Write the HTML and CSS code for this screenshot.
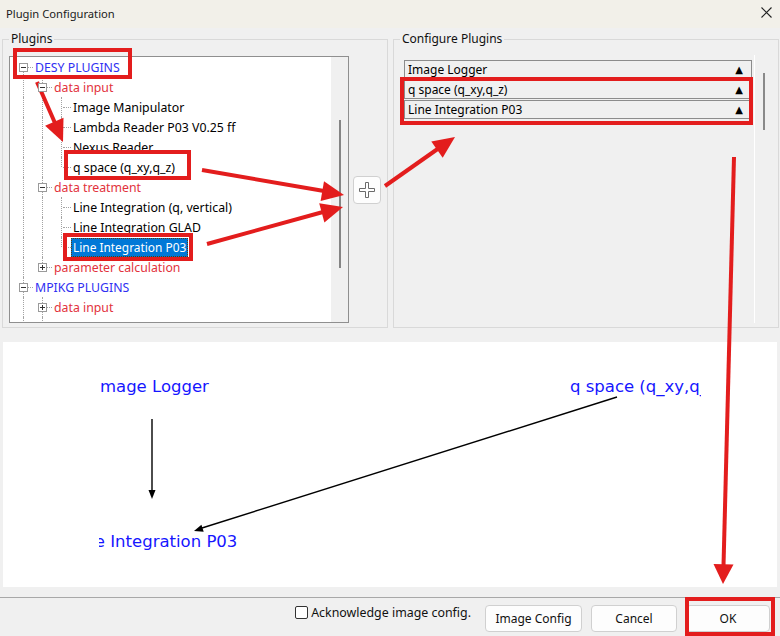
FILE: index.html
```html
<!DOCTYPE html>
<html>
<head>
<meta charset="utf-8">
<link rel="stylesheet" href="styles.css">
</head>
<body>
<div class="titlebar">
  <span class="title">Plugin Configuration</span>
  <svg class="close" width="11" height="11" viewBox="0 0 11 11"><path d="M0.5 0.5L10.5 10.5M10.5 0.5L0.5 10.5" stroke="#222" stroke-width="1.1" fill="none"/></svg>
</div>

<div class="top">
  <div class="group plugins">
    <span class="legend">Plugins</span>
    <div class="tree">
      <div class="tree-items">
        <div class="row"><span class="c exp down"><i class="box"></i></span><span class="lbl root">DESY PLUGINS</span></div>
        <div class="row"><span class="c ln"></span><span class="c exp up down"><i class="box"></i></span><span class="lbl cat">data input</span></div>
        <div class="row"><span class="c ln"></span><span class="c ln"></span><span class="c tee"></span><span class="lbl">Image Manipulator</span></div>
        <div class="row"><span class="c ln"></span><span class="c ln"></span><span class="c tee"></span><span class="lbl">Lambda Reader P03 V0.25 ff</span></div>
        <div class="row"><span class="c ln"></span><span class="c ln"></span><span class="c tee"></span><span class="lbl">Nexus Reader</span></div>
        <div class="row"><span class="c ln"></span><span class="c ln"></span><span class="c end"></span><span class="lbl">q space (q_xy,q_z)</span></div>
        <div class="row"><span class="c ln"></span><span class="c exp up down"><i class="box"></i></span><span class="lbl cat">data treatment</span></div>
        <div class="row"><span class="c ln"></span><span class="c ln"></span><span class="c tee"></span><span class="lbl">Line Integration (q, vertical)</span></div>
        <div class="row"><span class="c ln"></span><span class="c ln"></span><span class="c tee"></span><span class="lbl">Line Integration GLAD</span></div>
        <div class="row"><span class="c ln"></span><span class="c ln"></span><span class="c end"></span><span class="lbl sel">Line Integration P03</span></div>
        <div class="row"><span class="c ln"></span><span class="c exp up"><i class="box plus"></i></span><span class="lbl cat">parameter calculation</span></div>
        <div class="row"><span class="c exp up down"><i class="box"></i></span><span class="lbl root">MPIKG PLUGINS</span></div>
        <div class="row"><span class="c ln"></span><span class="c exp up down"><i class="box plus"></i></span><span class="lbl cat">data input</span></div>
        <div class="row"><span class="c ln"></span><span class="c ln"></span></div>
      </div>
      <div class="vscroll"><div class="thumb tree-thumb"></div></div>
    </div>
    <button class="addbtn" type="button">
      <svg width="18" height="18" viewBox="0 0 18 18"><path d="M7.5 1.5h3v6h6v3h-6v6h-3v-6h-6v-3h6z" fill="#fff" stroke="#6b6b6b" stroke-width="1"/></svg>
    </button>
  </div>

  <div class="group configure">
    <span class="legend">Configure Plugins</span>
    <div class="cfg-scroll">
      <div class="cfg-view">
        <div class="cfg-row"><span>Image Logger</span><span class="up">▲</span></div>
        <div class="cfg-row"><span>q space (q_xy,q_z)</span><span class="up">▲</span></div>
        <div class="cfg-row"><span>Line Integration P03</span><span class="up">▲</span></div>
      </div>
      <div class="vscroll cfg-bar"><div class="thumb cfg-thumb"></div></div>
    </div>
  </div>
</div>

<div class="diagram">
  <svg width="774" height="245" viewBox="3 342 774 245">
    <defs>
      <clipPath id="clipL"><rect x="99" y="342" width="400" height="245"/></clipPath>
      <clipPath id="clipR"><rect x="400" y="342" width="301" height="245"/></clipPath>
    </defs>
    <g class="node-text">
      <text x="152" y="392" text-anchor="middle" clip-path="url(#clipL)">Image Logger</text>
      <text x="570" y="392" clip-path="url(#clipR)">q space (q_xy,q_z)</text>
      <text x="154" y="547" text-anchor="middle" clip-path="url(#clipL)">Line Integration P03</text>
    </g>
    <line x1="152" y1="419" x2="152" y2="492" stroke="#000" stroke-width="1.4"/>
    <polygon points="152,499 148.5,490 155.5,490" fill="#000"/>
    <line x1="617" y1="397" x2="202" y2="528" stroke="#000" stroke-width="1.4"/>
    <polygon points="194,531 203.7,531.8 201.4,524.7" fill="#000"/>
  </svg>
</div>

<div class="footer">
  <label class="ack"><span class="chk"></span>Acknowledge image config.</label>
  <button class="btn b-img" type="button">Image Config</button>
  <button class="btn b-cancel" type="button">Cancel</button>
  <button class="btn b-ok" type="button">OK</button>
</div>

<svg class="annot" width="780" height="636" viewBox="0 0 780 636">
  <g fill="none" stroke="#e31d1d" stroke-width="4">
    <rect x="15" y="50" width="115" height="27"/>
    <rect x="66" y="152" width="123" height="26"/>
    <rect x="65" y="235" width="126" height="24"/>
    <rect x="402" y="79" width="349" height="44"/>
    <rect x="687" y="599" width="86" height="35"/>
    <line x1="37" y1="82" x2="55" y2="123"/>
    <line x1="202" y1="170" x2="324" y2="191"/>
    <line x1="207" y1="244" x2="323" y2="212"/>
    <line x1="385" y1="186" x2="439" y2="148"/>
    <line x1="734" y1="157" x2="723.5" y2="566"/>
  </g>
  <g fill="#e31d1d">
    <polygon points="63,142 45.1,125.8 63.5,117.8"/>
    <polygon points="344,195 320.6,201 324,181.3"/>
    <polygon points="343,207 324.4,222.5 319.2,203.2"/>
    <polygon points="455,137 442.7,157.8 431.3,141.4"/>
    <polygon points="723,584 713.5,564 733.5,564.5"/>
  </g>
</svg>
</body>
</html>
```

FILE: styles.css
```css
html, body {
  margin: 0;
  padding: 0;
}
body {
  width: 780px;
  height: 636px;
  overflow: hidden;
  position: relative;
  background: #f0f0f0;
  font-family: "Noto Sans", "Liberation Sans", sans-serif;
  font-size: 12px;
  color: #000;
}

/* title bar */
.titlebar {
  height: 28px;
  background: #f2f0e9;
  display: flex;
  align-items: center;
  justify-content: space-between;
  padding: 0 8px 0 6px;
  box-sizing: border-box;
}
.title {
  color: #1a1a1a;
  font-size: 11.2px;
  margin-top: -2px;
}
.close {
  margin-top: -4px;
}

/* groups */
.top {
  display: flex;
  gap: 5px;
  padding: 11px 0 0 2px;
}
.group {
  position: relative;
  box-sizing: border-box;
  width: 386px;
  height: 289px;
  border: 1px solid #d9d9d9;
}
.legend {
  position: absolute;
  top: -10px;
  left: 6px;
  padding: 0 2px;
  background: #f0f0f0;
  line-height: 18px;
  font-size: 12px;
  color: #111;
}
.plugins {
  display: flex;
  align-items: center;
  gap: 4px;
  padding: 16px 0 4px 6px;
}

/* tree */
.tree {
  width: 340px;
  height: 267px;
  box-sizing: border-box;
  border: 1px solid #8f8f8f;
  background: #fff;
  display: flex;
  align-self: flex-start;
}
.tree-items {
  flex: 1;
  overflow: hidden;
  padding-left: 4px;
}
.row {
  display: flex;
  align-items: center;
  height: 20px;
  white-space: nowrap;
}
.c {
  position: relative;
  flex: none;
  width: 19px;
  height: 20px;
}
.c.ln::before,
.c.tee::before,
.c.end::before,
.c.exp.up::before,
.c.exp.down::before {
  content: "";
  position: absolute;
  left: 9px;
  top: 0;
  bottom: 0;
  border-left: 1px dotted #a3a3a3;
}
.c.end::before,
.c.exp.up::before {
  bottom: 10px;
}
.c.exp.down::before {
  top: 10px;
}
.c.exp.up.down::before {
  top: 0;
  bottom: 0;
}
.c.tee::after,
.c.end::after,
.c.exp::after {
  content: "";
  position: absolute;
  left: 11px;
  right: 0;
  top: 10px;
  border-top: 1px dotted #a3a3a3;
}
.box {
  position: absolute;
  left: 5px;
  top: 6px;
  width: 9px;
  height: 9px;
  box-sizing: border-box;
  border: 1px solid #9a9a9a;
  background: #fff;
  z-index: 1;
}
.box::before {
  content: "";
  position: absolute;
  left: 1px;
  top: 3px;
  width: 5px;
  height: 1px;
  background: #333;
}
.box.plus::after {
  content: "";
  position: absolute;
  left: 3px;
  top: 1px;
  width: 1px;
  height: 5px;
  background: #333;
}
.lbl {
  padding: 0 2px;
  line-height: 19px;
  height: 19px;
  font-size: 12.3px;
}
.root {
  color: #2f2ff2;
}
.cat {
  color: #e2323c;
}
.sel {
  background: #0078d7;
  color: #fff;
  font-size: 11.9px;
  outline: 1px dotted #5a3a10;
  outline-offset: -1px;
}

/* scrollbars */
.vscroll {
  flex: none;
  width: 17px;
  background: #f0f0f0;
}
.thumb {
  width: 2px;
  background: #858585;
  margin-left: 8px;
}
.tree-thumb {
  margin-top: 63px;
  height: 148px;
}

/* add button */
.addbtn {
  width: 28px;
  height: 28px;
  padding: 0;
  box-sizing: border-box;
  border: 1px solid #d0d0d0;
  border-radius: 4px;
  background: #fdfdfd;
  display: flex;
  align-items: center;
  justify-content: center;
  margin-top: 1px;
}

/* configure */
.configure {
  padding: 15px 0 4px 5px;
}
.cfg-scroll {
  display: flex;
  width: 373px;
  height: 268px;
}
.cfg-view {
  width: 356px;
  box-sizing: border-box;
  padding: 5px 2px 0 5px;
  border-right: 1px solid #ffffff;
}
.cfg-row {
  height: 19px;
  box-sizing: border-box;
  border: 1px solid #8c8c8c;
  margin-bottom: 1px;
  display: flex;
  align-items: center;
  justify-content: space-between;
  padding: 0 8px 0 3px;
  font-size: 12px;
  line-height: 17px;
}
.cfg-row .up {
  font-size: 10px;
  font-family: "DejaVu Sans", sans-serif;
}
.cfg-bar {
  background: transparent;
}
.cfg-thumb {
  margin-top: 18px;
  height: 57px;
  background: #8a8a8a;
}

/* diagram */
.diagram {
  margin: 14px 3px 0 3px;
  height: 245px;
  background: #fff;
}
.diagram svg {
  display: block;
}
.node-text {
  font-family: "DejaVu Sans", sans-serif;
  font-size: 16.5px;
  fill: #1616ff;
}

/* footer */
.footer {
  margin-top: 10px;
  height: 39px;
  box-sizing: border-box;
  border-top: 1px solid #a8a8a8;
  display: flex;
  align-items: center;
  justify-content: flex-end;
  padding: 0 10px 0 0;
  gap: 9px;
}
.ack {
  display: flex;
  align-items: center;
  gap: 3px;
  margin-right: 5px;
  margin-top: -9px;
  font-size: 12.4px;
  color: #111;
}
.chk {
  width: 13px;
  height: 13px;
  box-sizing: border-box;
  border: 1px solid #333;
  border-radius: 2px;
  background: #fff;
}
.btn {
  height: 27px;
  box-sizing: border-box;
  border: 1px solid #d0d0d0;
  border-radius: 4px;
  background: #fdfdfd;
  font-family: "Noto Sans", "Liberation Sans", sans-serif;
  font-size: 12px;
  color: #111;
  padding: 0;
  margin-top: 3px;
}
.b-img { width: 97px; }
.b-cancel { width: 86px; }
.b-ok { width: 84px; }

/* annotations overlay */
.annot {
  position: absolute;
  left: 0;
  top: 0;
  pointer-events: none;
}
```
